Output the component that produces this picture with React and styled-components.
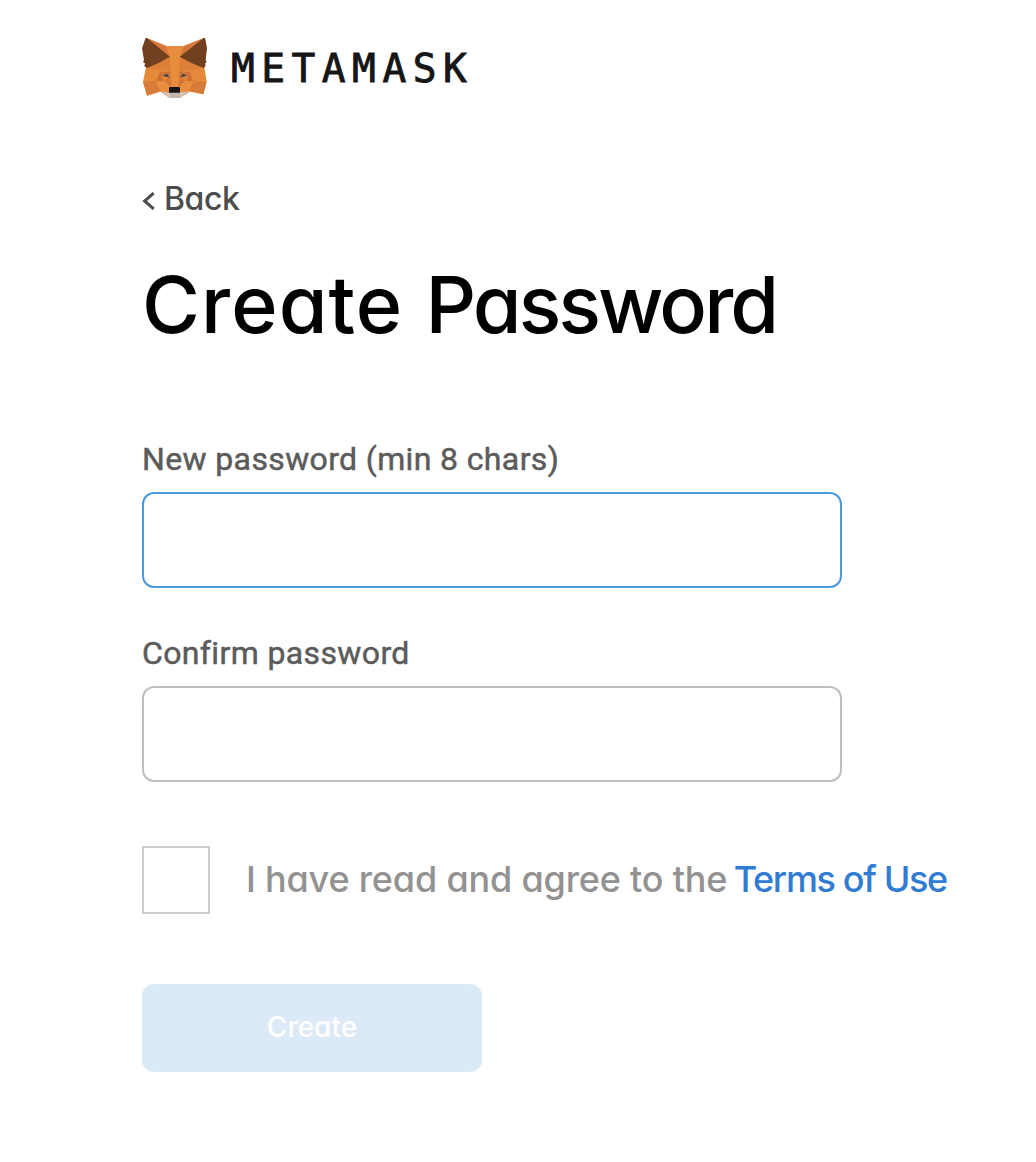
import React from "react";
import styled, { createGlobalStyle } from "styled-components";

const GlobalStyle = createGlobalStyle`
  * { box-sizing: border-box; }
  body { margin: 0; background: #fff; }
`;

const Page = styled.main`
  width: 1036px;
  min-height: 1162px;
  padding: 38px 0 0 142px;
  display: flex;
  flex-direction: column;
  align-items: flex-start;
  background: #fff;
  font-family: Inter, "Open Sans", sans-serif;
  font-feature-settings: "cv11", "calt" 0;
`;

const Brand = styled.header`
  display: flex;
  align-items: center;
  height: 60px;
  gap: 24px;
`;

const Wordmark = styled.span`
  font: 400 39.5px/60px "DejaVu Sans Mono", monospace;
  letter-spacing: 6.5px;
  color: #161616;
  -webkit-text-stroke: 0.9px #161616;
`;

const Back = styled.a`
  margin-top: 80px;
  display: flex;
  align-items: center;
  gap: 9px;
  height: 42px;
  font-size: 32px;
  line-height: 42px;
  font-weight: 450;
  letter-spacing: -0.4px;
  color: #4d4d4d;
  cursor: pointer;
`;

const BackIcon = styled.svg`
  margin-top: 3px;
`;

const Title = styled.h1`
  margin: 34px 0 0;
  height: 100px;
  font-size: 79px;
  line-height: 101px;
  font-weight: 450;
  letter-spacing: -2.9px;
  white-space: nowrap;
  color: #000;
`;

const TitleLead = styled.span`
  letter-spacing: 1.1px;
`;

const Form = styled.form`
  margin-top: 85px;
  display: flex;
  flex-direction: column;
  align-items: flex-start;
`;

const Field = styled.label`
  display: flex;
  flex-direction: column;
  gap: 13px;
  margin-bottom: 58px;
  font: 400 32px/40px Roboto, sans-serif;
  letter-spacing: 0.37px;
  -webkit-text-stroke: 0.5px #5b5b5b;
  color: #5b5b5b;
  &:nth-of-type(1) { margin-bottom: 45px; }
`;

const Input = styled.input`
  width: 700px;
  height: 96px;
  padding: 0 24px;
  border: 2px solid ${(p) => (p.$active ? "#4b9ade" : "#bbc0c5")};
  border-radius: 12px;
  background: #fff;
  font-size: 32px;
  outline: none;
`;

const Agreement = styled.div`
  display: flex;
  align-items: center;
  gap: 36px;
  margin-top: 6px;
  height: 68px;
`;

const Checkbox = styled.span`
  width: 68px;
  height: 68px;
  border: 2px solid #cdcdcd;
`;

const AgreementText = styled.span`
  font-size: 36px;
  line-height: 67px;
  height: 68px;
  font-weight: 450;
  letter-spacing: -0.18px;
  white-space: nowrap;
  color: #939292;
`;

const TermsLink = styled.a`
  letter-spacing: -1.35px;
  margin-left: -3px;
  color: #307cd2;
`;

const Submit = styled.button`
  margin-top: 70px;
  width: 340px;
  height: 88px;
  padding: 0 0 3px;
  border: 0;
  border-radius: 12px;
  background: #dceaf7;
  color: #fff;
  font: 500 28px/36px Inter, sans-serif;
  font-feature-settings: inherit;
`;

function Fox() {
  return (
    <svg width="65" height="60" viewBox="18 18 195 180" aria-hidden="true">
      <path fill="#e5893b" d="M29 18 91 42H143L207 18 212 49 205 106 212 149 202 187 160 179 133 197H100L74 179 33 191 21 149 30 106 20 49Z" />
      <path fill="#d9783a" d="M33 18 91 42 101 74ZM203 18 143 42 132 74Z" />
      <path fill="#dd7f39" d="M101 74 104 116 33 108 68 92ZM132 74 129 116 203 108 166 92Z" />
      <path fill="#d67b38" d="M21 149 60 148 71 176 33 191ZM212 149 172 148 160 175 202 187Z" />
      <path fill="#e68d3e" d="M91 42H143L132 74 128 165H105L101 74Z" />
      <path fill="#cf7135" d="M73 117 60 148H82L78 131ZM160 117 172 148H151L155 131Z" />
      <path fill="#d57736" d="M104 130 105 167 86 145ZM129 130 128 167 148 145Z" />
      <path fill="#e98d3e" d="M60 148H84L103 166 100 181 72 176ZM172 148H150L130 166 133 181 160 175Z" />
      <path fill="#cf7337" d="M73 120 104 118 102 139 78 132ZM160 120 129 118 131 139 155 132Z" />
      <path fill="#704020" d="M29 18 33 18 102 74 68 93 33 108 25 103 27 94 21 91 24 84 18 49ZM207 18 203 18 131 74 166 93 203 108 209 101 207 95 212 90 209 84 213 49Z" />
      <path fill="#d2c4b6" d="M76 178 100 182 104 166H130L132 181 157 178 133 197H101Z" />
      <path fill="#c4b7a9" d="M101 180H132L133 197H101Z" />
      <path fill="#161616" d="M101 165H130L132 168V182H99V168Z" />
      <path fill="#354652" d="M80 131 93 125 100 136ZM153 131 140 125 133 136Z" />
    </svg>
  );
}

function BackChevron() {
  return (
    <BackIcon width="13" height="18" viewBox="0 0 13 18" fill="none" stroke="#4d4d4d" strokeWidth="3" aria-hidden="true">
      <path d="M11.7 1 2.6 9 11.7 17" />
    </BackIcon>
  );
}

export default function App() {
  return (
    <>
      <GlobalStyle />
      <Page>
        <Brand>
          <Fox />
          <Wordmark>METAMASK</Wordmark>
        </Brand>
        <Back><BackChevron />Back</Back>
        <Title><TitleLead>Create </TitleLead>Password</Title>
        <Form onSubmit={(e) => e.preventDefault()}>
          <Field>New password (min 8 chars)<Input type="password" $active /></Field>
          <Field>Confirm password<Input type="password" /></Field>
          <Agreement>
            <Checkbox role="checkbox" aria-checked="false" />
            <AgreementText>I have read and agree to the <TermsLink>Terms of Use</TermsLink></AgreementText>
          </Agreement>
          <Submit disabled>Create</Submit>
        </Form>
      </Page>
    </>
  );
}
